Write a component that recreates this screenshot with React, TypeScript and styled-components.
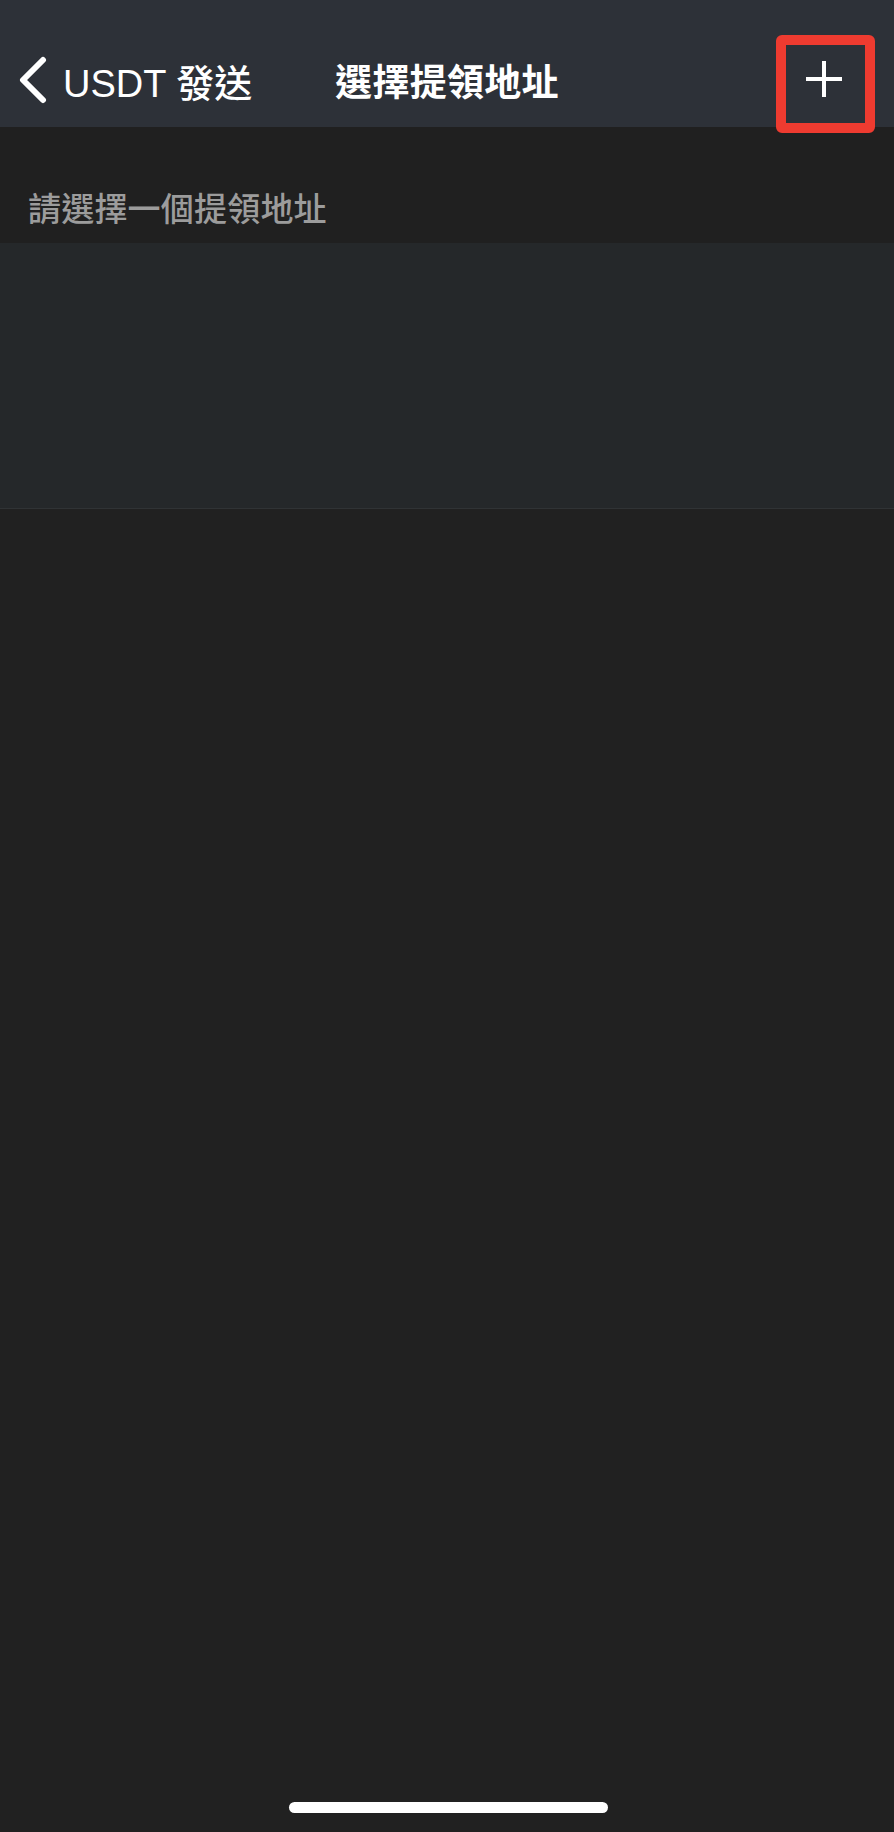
import React from 'react';
import styled, { createGlobalStyle } from 'styled-components';

const GlobalStyle = createGlobalStyle`
  html, body {
    margin: 0;
    padding: 0;
    background: #212121;
  }
  * {
    box-sizing: border-box;
  }
`;

const fontStack = `"Liberation Sans", "Noto Sans CJK TC", sans-serif`;

const Page = styled.div`
  width: 894px;
  height: 1832px;
  display: flex;
  flex-direction: column;
  background: #212121;
  font-family: ${fontStack};
  overflow: hidden;
`;

const Header = styled.header`
  position: relative;
  z-index: 2;
  height: 127px;
  padding-top: 34px;
  background: #2d3138;
  display: grid;
  grid-template-columns: 1fr auto 1fr;
  align-items: start;
`;

const BackButton = styled.div`
  height: 92px;
  display: flex;
  align-items: center;
  gap: 16px;
  padding-left: 18px;
  color: #ffffff;
  font-size: 38px;
  font-weight: 500;
  white-space: nowrap;
`;

const Title = styled.h1`
  margin: 0;
  height: 92px;
  display: flex;
  align-items: center;
  color: #ffffff;
  font-size: 37px;
  font-weight: 700;
  letter-spacing: 0.3px;
`;

const Actions = styled.div`
  display: flex;
  justify-content: flex-end;
  padding-right: 19px;
`;

const AddButton = styled.div`
  position: relative;
  width: 99px;
  height: 98px;
  margin-top: 1px;
  display: flex;
  align-items: center;
  justify-content: center;
  padding: 0 4px 11px 0;
`;

const Highlight = styled.span`
  position: absolute;
  inset: 0;
  border: 10px solid #ee3b30;
  border-radius: 6px;
  pointer-events: none;
`;

const SectionLabel = styled.div`
  height: 116px;
  padding: 66px 0 0 28px;
  color: #9c9c9c;
  font-size: 33px;
  font-weight: 500;
  line-height: 33px;
  letter-spacing: 0.2px;
  background: #202020;
`;

const AddressList = styled.div`
  height: 266px;
  background: #25282a;
  border-bottom: 1px solid #303335;
`;

const Spacer = styled.div`
  flex: 1;
`;

const HomeIndicator = styled.div`
  align-self: center;
  width: 319px;
  height: 11px;
  margin: 0 0 19px 3px;
  border-radius: 6px;
  background: #ffffff;
`;

const ChevronLeft = () => (
  <svg width="29" height="48" viewBox="0 0 29 48" fill="none">
    <polyline
      points="25,4 5,24 25,44"
      stroke="#ffffff"
      strokeWidth="6"
      strokeLinecap="round"
      strokeLinejoin="round"
    />
  </svg>
);

const PlusIcon = () => (
  <svg width="38" height="38" viewBox="0 0 38 38" fill="none">
    <line x1="19" y1="1" x2="19" y2="37" stroke="#ffffff" strokeWidth="4" />
    <line x1="1" y1="19" x2="37" y2="19" stroke="#ffffff" strokeWidth="4" />
  </svg>
);

const App: React.FC = () => {
  return (
    <>
      <GlobalStyle />
      <Page>
        <Header>
          <BackButton>
            <ChevronLeft />
            <span>USDT 發送</span>
          </BackButton>
          <Title>選擇提領地址</Title>
          <Actions>
            <AddButton>
              <PlusIcon />
              <Highlight />
            </AddButton>
          </Actions>
        </Header>
        <SectionLabel>請選擇一個提領地址</SectionLabel>
        <AddressList />
        <Spacer />
        <HomeIndicator />
      </Page>
    </>
  );
};

export default App;
